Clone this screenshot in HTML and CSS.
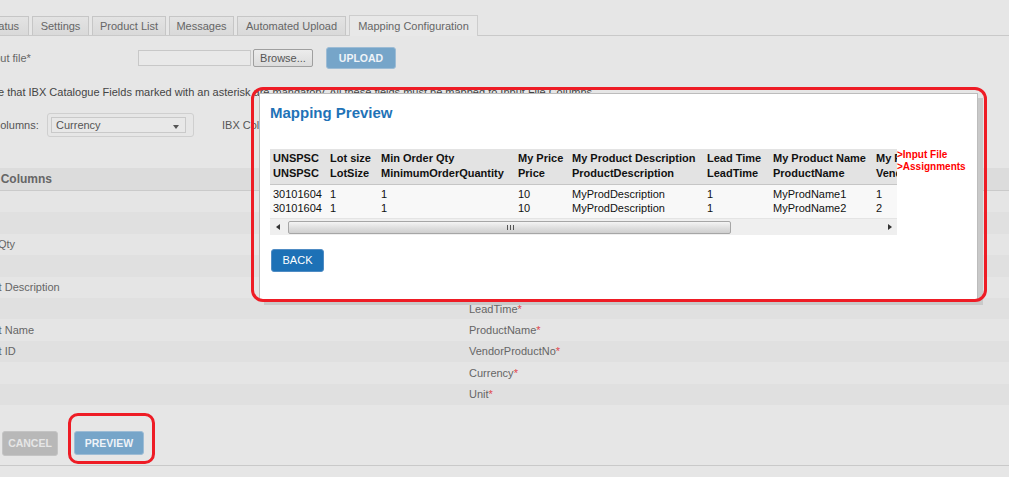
FILE: index.html
```html
<!DOCTYPE html>
<html>
<head>
<meta charset="utf-8">
<title>Mapping Configuration</title>
<link rel="stylesheet" href="styles.css">
</head>
<body>
<div class="page">
  <nav class="tabs">
    <span class="tab w-status">Status</span>
    <span class="tab w-settings">Settings</span>
    <span class="tab w-plist">Product List</span>
    <span class="tab w-msg">Messages</span>
    <span class="tab w-auto">Automated Upload</span>
    <span class="tab active w-map">Mapping Configuration</span>
  </nav>

  <div class="upload-row">
    <label class="file-label">Input file*</label>
    <span class="file-box"></span>
    <span class="browse">Browse...</span>
    <span class="btn btn-blue upload">UPLOAD</span>
  </div>

  <p class="note">Please note that IBX Catalogue Fields marked with an asterisk are mandatory. All these fields must be mapped to Input File Columns.</p>

  <div class="map-row">
    <label class="map-label">Input File Columns:</label>
    <span class="select-wrap"><span class="select">Currency<i class="caret"></i></span></span>
    <label class="ibx-label">IBX Columns:</label>
  </div>

  <div class="grid">
    <div class="grid-head"><span class="c1">Input File Columns</span><span class="c2">IBX Catalogue Fields</span></div>
    <div class="grid-row"><span class="c1">UNSPSC</span><span class="c2">UNSPSC<span class="req">*</span></span></div>
    <div class="grid-row"><span class="c1">Lot size</span><span class="c2">LotSize<span class="req">*</span></span></div>
    <div class="grid-row"><span class="c1">Min Order Qty</span><span class="c2">MinimumOrderQuantity<span class="req">*</span></span></div>
    <div class="grid-row"><span class="c1">My Price</span><span class="c2">Price<span class="req">*</span></span></div>
    <div class="grid-row"><span class="c1">My Product Description</span><span class="c2">ProductDescription<span class="req">*</span></span></div>
    <div class="grid-row"><span class="c1 link">Lead Time</span><span class="c2">LeadTime<span class="req">*</span></span></div>
    <div class="grid-row"><span class="c1">My Product Name</span><span class="c2">ProductName<span class="req">*</span></span></div>
    <div class="grid-row"><span class="c1">My Product ID</span><span class="c2">VendorProductNo<span class="req">*</span></span></div>
    <div class="grid-row"><span class="c1">Currency</span><span class="c2">Currency<span class="req">*</span></span></div>
    <div class="grid-row"><span class="c1">Unit</span><span class="c2">Unit<span class="req">*</span></span></div>
  </div>

  <div class="actions">
    <span class="btn btn-gray cancel">CANCEL</span>
    <span class="btn btn-blue preview-btn">PREVIEW</span>
  </div>
  <div class="footer-line"></div>
</div>

<div class="modal">
  <h2 class="modal-title">Mapping Preview</h2>
  <div class="preview-scroll">
    <table class="preview">
      <colgroup>
        <col class="k1"><col class="k2"><col class="k3"><col class="k4"><col class="k5">
        <col class="k6"><col class="k7"><col class="k8">
      </colgroup>
      <thead>
        <tr>
          <th>UNSPSC<br>UNSPSC</th>
          <th>Lot size<br>LotSize</th>
          <th>Min Order Qty<br>MinimumOrderQuantity</th>
          <th>My Price<br>Price</th>
          <th>My Product Description<br>ProductDescription</th>
          <th>Lead Time<br>LeadTime</th>
          <th>My Product Name<br>ProductName</th>
          <th>My Product ID<br>VendorProductNo</th>
        </tr>
      </thead>
      <tbody>
        <tr class="first">
          <td>30101604</td><td>1</td><td>1</td><td>10</td><td>MyProdDescription</td>
          <td>1</td><td>MyProdName1</td><td>1</td>
        </tr>
        <tr class="last">
          <td>30101604</td><td>1</td><td>1</td><td>10</td><td>MyProdDescription</td>
          <td>1</td><td>MyProdName2</td><td>2</td>
        </tr>
      </tbody>
    </table>
  </div>
  <div class="hscroll">
    <span class="arrow-left"></span>
    <span class="thumb"><span class="grip"></span></span>
    <span class="arrow-right"></span>
  </div>
  <span class="btn back">BACK</span>
  <div class="assign-note">&gt;Input File<br>&gt;Assignments</div>
</div>

<div class="mark mark-modal"></div>
<div class="mark mark-preview"></div>
</body>
</html>
```

FILE: styles.css
```css
* { box-sizing: border-box; }
html, body { margin: 0; padding: 0; }
body {
  position: relative;
  width: 1009px;
  height: 477px;
  overflow: hidden;
  background: #e6e6e6;
  font-family: "Liberation Sans", Arial, sans-serif;
  font-size: 11px;
  color: #666;
}
.page { margin-left: -60px; width: 1069px; }

/* tabs */
.tabs {
  display: flex;
  align-items: flex-end;
  gap: 3px;
  margin-top: 15px;
  padding-left: 38px;
  height: 21px;
  border-bottom: 1px solid #c9c9c9;
}
.tab {
  height: 19px;
  line-height: 18px;
  text-align: center;
  border: 1px solid #c6c6c6;
  border-bottom: none;
  background: linear-gradient(#e3e3e3, #d9d9d9);
  color: #666;
}
.tab.active {
  height: 21px;
  line-height: 20px;
  margin-bottom: -1px;
  background: #e8e8e8;
  border-color: #cdcdcd;
}
.w-status { width: 51px; }
.w-settings { width: 57px; }
.w-plist { width: 74px; }
.w-msg { width: 65px; }
.w-auto { width: 109px; }
.w-map { width: 129px; }

/* upload row */
.upload-row {
  display: flex;
  align-items: center;
  height: 22px;
  margin-top: 11px;
  padding-left: 45px;
}
.file-label { width: 153px; color: #666; }
.file-box {
  width: 113px;
  height: 16px;
  border: 1px solid #c8c8c8;
  background: #e9e9e9;
}
.browse {
  margin-left: 2px;
  width: 60px;
  height: 18px;
  line-height: 16px;
  text-align: center;
  border: 1px solid #9f9f9f;
  border-radius: 2px;
  background: linear-gradient(#ececec, #dcdcdc);
  color: #555;
}
.btn {
  display: inline-block;
  text-align: center;
  border-radius: 3px;
}
.btn-blue {
  background: #76a5c9;
  border: 1px solid #9dbcd5;
  color: #eef3f8;
  font-weight: bold;
  font-size: 10.5px;
}
.upload {
  margin-left: 13px;
  width: 70px;
  height: 22px;
  line-height: 20px;
}

/* note */
.note {
  margin: 16px 0 0;
  padding-left: 6px;
  line-height: 14px;
  color: #444;
  white-space: nowrap;
}

/* column mapping row */
.map-row {
  display: flex;
  align-items: center;
  height: 24px;
  margin-top: 14px;
  padding-left: 4px;
}
.map-label { width: 103px; color: #555; }
.select-wrap {
  width: 147px;
  height: 24px;
  border: 1px solid #cfcfcf;
  border-radius: 3px;
  padding: 3px;
}
.select {
  position: relative;
  display: block;
  width: 135px;
  height: 16px;
  line-height: 14px;
  padding-left: 4px;
  border: 1px solid #c9c9c9;
  background: #e8e8e8;
  color: #555;
}
.caret {
  position: absolute;
  right: 6px;
  top: 7px;
  border-left: 3.5px solid transparent;
  border-right: 3.5px solid transparent;
  border-top: 4px solid #555;
}
.ibx-label { margin-left: 28px; color: #555; }

/* grid */
.grid { margin-top: 31px; }
.grid-head {
  display: flex;
  align-items: center;
  height: 23px;
  padding-left: 4px;
  background: #dcdcdc;
  border-bottom: 1px solid #cacaca;
  font-size: 12px;
  font-weight: bold;
  color: #666;
}
.grid-head .c1 { width: 525px; }
.grid-row {
  display: flex;
  align-items: center;
  height: 21.4px;
  padding-left: 6px;
  background: #e5e5e5;
}
.grid-row:nth-child(odd) { background: #e0e0e0; }
.grid-row .c1 { width: 523px; white-space: nowrap; }
.c1.link { color: #4a7fb8; }
.req { color: #e0474c; }

/* actions */
.actions {
  display: flex;
  align-items: center;
  gap: 16px;
  margin-top: 26px;
  padding-left: 62px;
  height: 25px;
}
.btn-gray {
  background: #b8b8b8;
  border: 1px solid #c4c4c4;
  color: #e6e6e6;
  font-weight: bold;
  font-size: 10.5px;
}
.cancel { width: 56px; height: 25px; line-height: 23px; }
.preview-btn { width: 70px; height: 24px; line-height: 22px; }
.footer-line { margin-top: 9px; border-top: 1px solid #c9c9c9; }

/* modal */
.modal {
  position: absolute;
  left: 259px;
  top: 93px;
  width: 719px;
  height: 207px;
  background: #fff;
  border: 1px solid #bcbcbc;
  box-shadow: 5px 5px 0 #c9c9c9;
  padding: 10px 0 0 10px;
}
.modal-title {
  margin: 0;
  font-size: 15px;
  line-height: 18px;
  font-weight: bold;
  color: #1f73b7;
}
.preview-scroll {
  margin-top: 27px;
  width: 627px;
  overflow: hidden;
  background: #f8f8f8;
}
.preview {
  table-layout: fixed;
  width: 703px;
  border-collapse: collapse;
  color: #111;
  font-size: 11px;
}
.k1 { width: 57px; } .k2 { width: 51px; } .k3 { width: 137px; } .k4 { width: 54px; }
.k5 { width: 135px; } .k6 { width: 66px; } .k7 { width: 103px; } .k8 { width: 100px; }
.preview th {
  text-align: left;
  font-weight: bold;
  line-height: 15px;
  padding: 2px 0 3px 3px;
  background: #e3e3e3;
  border-bottom: 1px solid #c6c6c6;
  white-space: nowrap;
  overflow: hidden;
}
.preview td {
  line-height: 14px;
  padding: 0 0 0 3px;
  white-space: nowrap;
  overflow: hidden;
}
.preview tr.first td { padding-top: 2px; }
.preview tr.last td { padding-bottom: 3px; }

.hscroll {
  position: relative;
  width: 627px;
  height: 17px;
  background: #efefef;
  border-top: 1px solid #e4e4e4;
}
.arrow-left {
  position: absolute;
  left: 6px;
  top: 5px;
  border-top: 3px solid transparent;
  border-bottom: 3px solid transparent;
  border-right: 4px solid #333;
}
.arrow-right {
  position: absolute;
  left: 618px;
  top: 5px;
  border-top: 3px solid transparent;
  border-bottom: 3px solid transparent;
  border-left: 4px solid #333;
}
.thumb {
  position: absolute;
  left: 18px;
  top: 2px;
  width: 443px;
  height: 13px;
  border: 1px solid #a6a6a6;
  border-radius: 2px;
  background: linear-gradient(#f4f4f4, #dedede 55%, #cfcfcf);
}
.grip {
  position: absolute;
  left: 218px;
  top: 3px;
  width: 7px;
  height: 5px;
  background: repeating-linear-gradient(90deg, #555 0 1px, transparent 1px 3px);
}
.back {
  margin-top: 14px;
  margin-left: 1px;
  width: 53px;
  height: 23px;
  line-height: 21px;
  background: #1d71b6;
  border: 1px solid #4f8cc4;
  color: #fff;
  font-size: 11px;
}
.assign-note {
  position: absolute;
  left: 637px;
  top: 55px;
  color: #f00;
  font-weight: bold;
  font-size: 10px;
  line-height: 12px;
}

/* red annotation outlines */
.mark {
  position: absolute;
  border: 3px solid #ee1c25;
  pointer-events: none;
}
.mark-modal {
  left: 251px;
  top: 87px;
  width: 736px;
  height: 215px;
  border-radius: 12px;
}
.mark-preview {
  left: 68px;
  top: 413px;
  width: 87px;
  height: 51px;
  border-radius: 10px;
}
```
